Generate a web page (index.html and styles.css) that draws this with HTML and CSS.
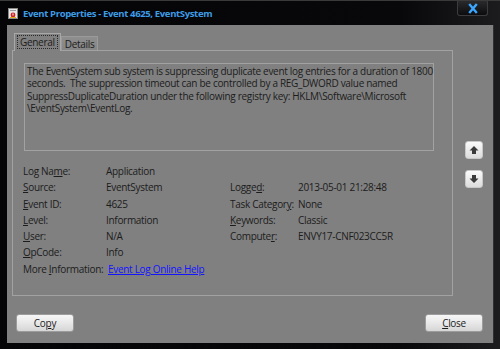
FILE: index.html
```html
<!DOCTYPE html>
<html lang="en">

<head>
  <meta charset="UTF-8" />
  <title>Event Properties</title>
  <link rel="stylesheet" href="styles.css">
</head>

<body>
  <div class="window">
    <div class="titlebar">
      <svg class="app-icon" width="10" height="11" viewBox="0 0 10 11">
        <rect x="0.5" y="0.5" width="9" height="10" fill="#e8e8e8" stroke="#8a8a8a" />
        <rect x="2" y="2" width="6" height="1" fill="#9a9a9a" />
        <circle cx="5" cy="7" r="2.4" fill="#d42020" />
        <rect x="4.5" y="5.5" width="1" height="2" fill="#fff" />
        <rect x="2" y="9" width="6" height="1" fill="#e0b020" />
      </svg>
      <div class="title">Event Properties - Event 4625, EventSystem</div>
      <div class="close-x">
        <svg width="12" height="11" viewBox="0 0 12 11">
          <path d="M3 2 L9 9 M9 2 L3 9" stroke="#3aa6ff" stroke-width="2.4" stroke-linecap="square" />
        </svg>
      </div>
    </div>

    <div class="client">
      <div class="main">
        <div class="tabs-area">
          <div class="tab-row">
            <div class="tab active"><span class="focus">General</span></div>
            <div class="tab">Details</div>
          </div>
          <div class="panel">
            <div class="desc">The EventSystem sub system is suppressing duplicate event log entries for a duration of 1800<br>seconds.&nbsp; The suppression timeout can be controlled by a REG_DWORD value named<br>SuppressDuplicateDuration under the following registry key: HKLM\Software\Microsoft<br>\EventSystem\EventLog.</div>

            <div class="fields">
              <div>Log Na<u>m</u>e:</div>
              <div>Application</div>
              <div></div>
              <div></div>

              <div><u>S</u>ource:</div>
              <div>EventSystem</div>
              <div>Logge<u>d</u>:</div>
              <div>2013-05-01 21:28:48</div>

              <div><u>E</u>vent ID:</div>
              <div>4625</div>
              <div>Task Categor<u>y</u>:</div>
              <div>None</div>

              <div><u>L</u>evel:</div>
              <div>Information</div>
              <div><u>K</u>eywords:</div>
              <div>Classic</div>

              <div><u>U</u>ser:</div>
              <div>N/A</div>
              <div>Compute<u>r</u>:</div>
              <div>ENVY17-CNF023CC5R</div>

              <div><u>O</u>pCode:</div>
              <div>Info</div>
              <div></div>
              <div></div>

              <div class="more">More <u>I</u>nformation:</div>
              <div class="link-cell"><a href="#">Event Log Online Help</a></div>
              <div></div>
              <div></div>
            </div>
          </div>
        </div>

        <div class="side">
          <div class="arrow-btn">
            <svg width="10" height="10" viewBox="0 0 10 10">
              <path d="M5 1 L9.5 5.5 L7 5.5 L7 9 L3 9 L3 5.5 L0.5 5.5 Z" fill="#3a3a3a" />
            </svg>
          </div>
          <div class="arrow-btn">
            <svg width="10" height="10" viewBox="0 0 10 10">
              <path d="M5 9 L9.5 4.5 L7 4.5 L7 1 L3 1 L3 4.5 L0.5 4.5 Z" fill="#3a3a3a" />
            </svg>
          </div>
        </div>
      </div>

      <div class="footer">
        <button class="btn">Co<u>p</u>y</button>
        <button class="btn"><u>C</u>lose</button>
      </div>
    </div>
  </div>
</body>

</html>
```

FILE: styles.css
```css
body {
  margin: 0;
  background: #000;
  font-family: "Open Sans", "Noto Sans", sans-serif;
  font-size: 10px;
  letter-spacing: -0.3px;
  color: #1c1c1c;
}

.window {
  width: 500px;
  height: 349px;
  box-sizing: border-box;
  background: linear-gradient(to right, #050507 0%, #08080a 80%, #1c1c1e 100%);
  border-top: 1px solid #3a3a3a;
  display: flex;
  flex-direction: column;
}

.titlebar {
  height: 24px;
  display: flex;
  align-items: center;
  padding-left: 8px;
  position: relative;
}

.app-icon {
  margin-right: 5px;
}

.title {
  color: #3d9be6;
  font-weight: bold;
  font-size: 9.5px;
  letter-spacing: -0.35px;
}

.close-x {
  position: absolute;
  right: 12px;
  top: 0;
  width: 31px;
  height: 15px;
  border-radius: 0 0 3px 3px;
  background: linear-gradient(#2a2a2c, #0c0c0e);
  border: 1px solid #3c3c3e;
  border-top: none;
  box-sizing: border-box;
  display: flex;
  justify-content: center;
  align-items: center;
}

.client {
  margin: 0 6px 6px 7px;
  flex: 1;
  background: #808080;
  border-right: 1px solid #303030;
  display: flex;
  flex-direction: column;
  padding: 7px 10px 0 5px;
}

.main {
  display: flex;
  height: 264px;
}

.tabs-area {
  width: 441px;
  display: flex;
  flex-direction: column;
}

.tab-row {
  display: flex;
  align-items: flex-end;
  height: 18px;
  padding-left: 2px;
}

.tab {
  height: 14px;
  padding: 0 3px;
  border: 1px solid #9a9a9a;
  border-bottom: none;
  background: linear-gradient(#8e8e8e, #858585);
  line-height: 14px;
  margin-bottom: -1px;
}

.tab.active {
  height: 17px;
  padding: 0 2px;
  background: #808080;
  border-color: #a8a8a8;
  position: relative;
  z-index: 1;
  line-height: 17px;
}

.focus {
  border: 1px dotted #2a2a2a;
  padding: 0 2px;
  line-height: 12px;
  display: inline-block;
}

.panel {
  flex: 1;
  border: 1px solid #a2a2a2;
  box-sizing: border-box;
  padding: 12px 0 0 11px;
}

.desc {
  width: 410px;
  height: 88px;
  border: 1px solid #a2a2a2;
  box-sizing: border-box;
  padding: 1px 2px;
  line-height: 12.3px;
  white-space: nowrap;
}

.fields {
  margin-top: 12px;
  margin-left: -1px;
  display: grid;
  grid-template-columns: 83px 124px 68px auto;
  grid-auto-rows: 16.3px;
  line-height: 16px;
}

.more {
  white-space: nowrap;
}

.link-cell {
  padding-left: 2px;
}

.link-cell a {
  color: #1414ff;
}

.side {
  flex: 1;
  display: flex;
  flex-direction: column;
  align-items: flex-end;
  padding-top: 109px;
  gap: 11px;
}

.arrow-btn {
  width: 18px;
  height: 18px;
  box-sizing: border-box;
  border: 1px solid #c8c8c8;
  border-radius: 3px;
  background: linear-gradient(#fafafa, #dcdcdc);
  display: flex;
  justify-content: center;
  align-items: center;
}

.footer {
  display: flex;
  justify-content: space-between;
  padding: 18px 0 0 4px;
}

.btn {
  width: 58px;
  height: 18px;
  border: 1px solid #9c9c9c;
  border-radius: 3px;
  background: linear-gradient(#f6f6f6 0%, #e8e8e8 50%, #d6d6d6 100%);
  font-family: "Open Sans", "Noto Sans", sans-serif;
  font-size: 10px;
  letter-spacing: -0.3px;
  color: #1c1c1c;
  padding: 0;
}
```
